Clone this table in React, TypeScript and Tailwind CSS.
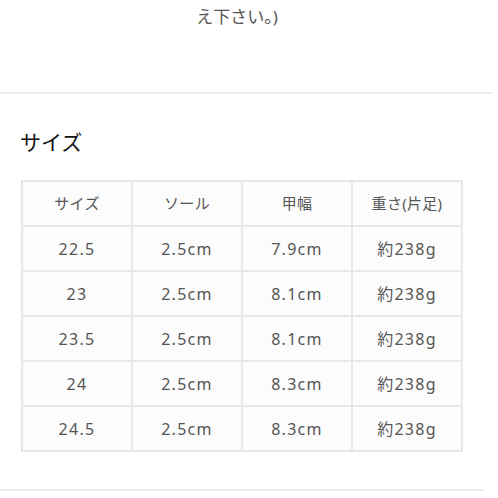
const rows = [
  ["22.5", "2.5cm", "7.9cm", "約238g"],
  ["23", "2.5cm", "8.1cm", "約238g"],
  ["23.5", "2.5cm", "8.1cm", "約238g"],
  ["24", "2.5cm", "8.3cm", "約238g"],
  ["24.5", "2.5cm", "8.3cm", "約238g"],
];

const head = ["サイズ", "ソール", "甲幅", "重さ(片足)"];

export default function App() {
  return (
    <div className="w-[498px] h-[498px] overflow-hidden bg-white font-['Noto_Sans','Noto_Sans_CJK_JP',sans-serif]">
      <p className="pt-[6px] pr-[24px] text-center text-[17px] leading-[22px] text-[#555]">え下さい。)</p>

      <div className="mt-[64px] mr-[5px] h-[2px] bg-[#ededed]" />

      <h2 className="mt-[34px] ml-[20px] text-[21px] leading-[28px] text-[#111]">サイズ</h2>

      <table className="mt-[24px] ml-[21px] border-collapse text-[16px] tracking-[0.08em] text-[#555]">
        <tbody>
          <tr>
            {head.map((h) => (
              <td key={h} className="w-[110px] h-[45px] border-2 border-[#e8e8e8] bg-[#fcfcfc] text-center align-middle text-[15px] tracking-[0.02em]">
                {h}
              </td>
            ))}
          </tr>
          {rows.map((r) => (
            <tr key={r[0]}>
              {r.map((c, i) => (
                <td key={i} className="w-[110px] h-[45px] border-2 border-[#e8e8e8] bg-[#fcfcfc] text-center align-middle">
                  {c}
                </td>
              ))}
            </tr>
          ))}
        </tbody>
      </table>

      <div className="mt-[37px] mr-[13px] h-[2px] bg-[#ededed]" />
    </div>
  );
}
